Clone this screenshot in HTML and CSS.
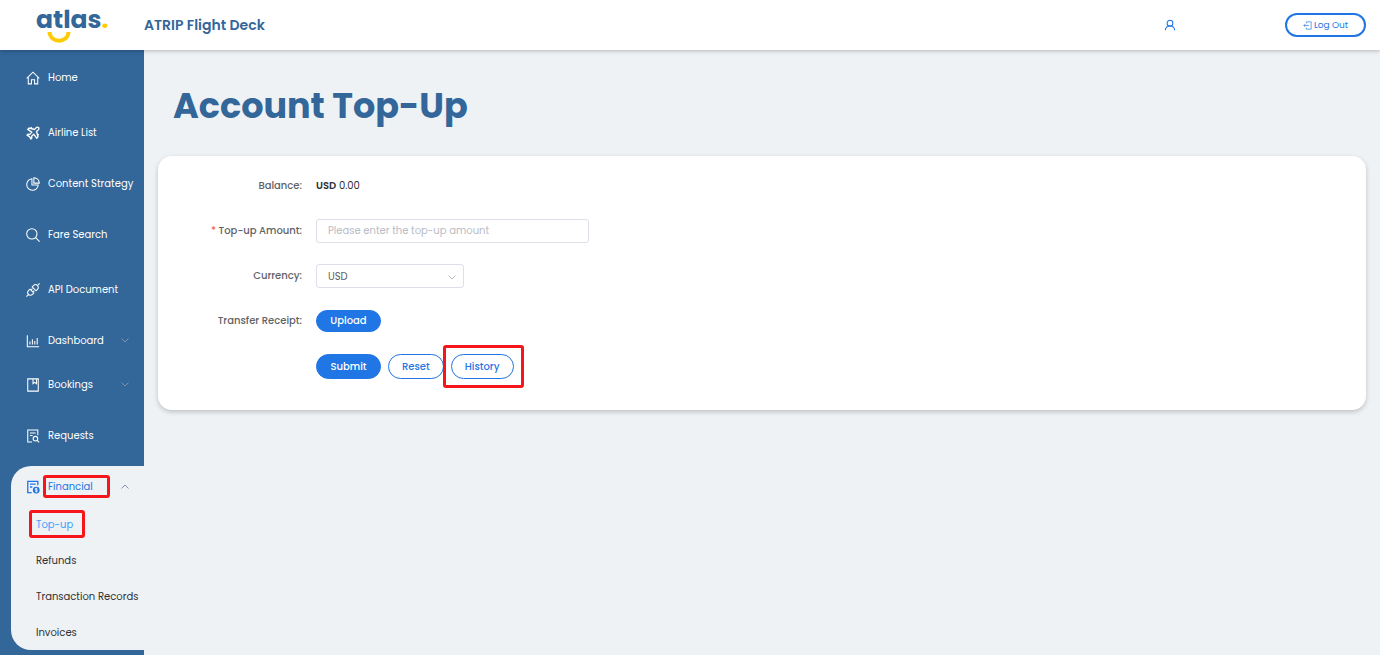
FILE: index.html
```
<!DOCTYPE html>
<html lang="en">
<head>
  <meta charset="UTF-8">
  <title>ATRIP Flight Deck</title>
  <link rel="stylesheet" href="styles.css">
</head>
<body>
  <header class="header">
    <a class="logo" href="#" aria-label="atlas">
      <span class="logo-text">atlas<span class="logo-dot">.</span></span>
      <svg class="logo-smile" viewBox="0 0 24 12"><path d="M2.500 0C3 11.500 21 11.500 21.500 0"/></svg>
    </a>
    <div class="app-name">ATRIP Flight Deck</div>
    <a class="user" href="#" aria-label="Profile">
      <svg class="icon" viewBox="0 0 16 16"><circle cx="8" cy="5.500" r="3.800"/><path d="M1.800 15c.2-3.600 2.700-5.700 6.200-5.700s6 2.100 6.200 5.700"/></svg>
    </a>
    <button class="logout" type="button">
      <svg class="icon" viewBox="0 0 16 16"><path d="M6 4V1.500h8.500v13H6V12M10.500 8H1.500M4.500 5l-3 3 3 3"/></svg>
      Log Out
    </button>
  </header>

  <div class="layout">
    <nav class="sidebar">
      <a class="nav-item" href="#">
        <svg class="icon" viewBox="0 0 16 16"><path d="M.8 8.500L8 1.300l7.200 7.200M2.600 7.500v7.200h3.600V10h3.600v4.700h3.600V7.500"/></svg>
        Home
      </a>
      <a class="nav-item wide" href="#">
        <svg class="icon bold" viewBox="0 0 16 16"><path d="M14.300 1.700c-.8-.7-2-.4-2.800.4L9.700 4 3.600 2.300 2 3.800l4.600 3.300-2.300 2.500-2-.3-1.100 1.100 2.700 1.700 1.700 2.700 1.100-1.100-.3-2 2.500-2.300 3.300 4.600 1.500-1.600L12 6.300l1.900-1.800c.8-.8 1.100-2 .4-2.800z"/><path d="M5.500 1.500l1.700 1.700M14.500 10.500l-1.700-1.700"/></svg>
        Airline List
      </a>
      <a class="nav-item" href="#">
        <svg class="icon" viewBox="0 0 16 16"><path d="M6.800 2A6.600 6.600 0 1 0 14 9.200H6.800z"/><path d="M9 .8V7h6.200C15 3.600 12.400 1 9 .8z"/></svg>
        Content Strategy
      </a>
      <a class="nav-item" href="#">
        <svg class="icon" viewBox="0 0 16 16"><circle cx="6.700" cy="6.700" r="5.900"/><path d="M11 11l4.500 4.500"/></svg>
        Fare Search
      </a>
      <a class="nav-item wide" href="#">
        <svg class="icon" viewBox="0 0 16 16"><path d="M7 4.500L11.500 9l1.600-1.600c1.300-1.300 1.300-3.200 0-4.500s-3.200-1.300-4.500 0zM4.500 7L9 11.500l-1.600 1.600c-1.300 1.300-3.200 1.300-4.500 0s-1.300-3.200 0-4.500zM13.100 2.900L15.500.500M2.900 13.100L.500 15.500M5.700 8.200l1.700-1.700M7.800 10.300l1.700-1.700"/></svg>
        API Document
      </a>
      <a class="nav-item" href="#">
        <svg class="icon" viewBox="0 0 16 16"><path d="M1.500 1.500v13H15M4.500 12V8.500M7.300 12V6M10 12V8M12.800 12V4.500"/></svg>
        Dashboard
        <svg class="arrow" viewBox="0 0 8 5"><path d="M.5.500L4 4 7.500.500"/></svg>
      </a>
      <a class="nav-item tight" href="#">
        <svg class="icon" viewBox="0 0 16 16"><path d="M2 1h12v14H2zM8 1v5.500l2-1.500 2 1.500V1"/></svg>
        Bookings
        <svg class="arrow" viewBox="0 0 8 5"><path d="M.5.500L4 4 7.500.500"/></svg>
      </a>
      <a class="nav-item" href="#">
        <svg class="icon" viewBox="0 0 16 16"><path d="M7 14.800H2V1.200h11.500v6M4.500 4.500H11M4.500 7.500h3"/><circle cx="10.800" cy="11" r="2.600"/><path d="M12.700 12.900l2.300 2.300"/></svg>
        Requests
      </a>

      <div class="nav-group">
        <a class="nav-item" href="#">
          <svg class="icon bold" viewBox="0 0 16 16"><path d="M6.500 14.500H2v-13h11.500V6M4.500 4.800H11M4.500 8h2.700"/><circle class="coin" cx="11.700" cy="11.500" r="3.900"/><path class="coin-mark" d="M13 10.200c-.6-.8-2.500-.7-2.500.4 0 1.200 2.600.7 2.600 1.900 0 1.100-2.100 1.200-2.700.3M11.700 9v5"/></svg>
          <span class="marked marked-parent">Financial</span>
          <svg class="arrow" viewBox="0 0 8 5"><path d="M.5 4.500L4 1l3.500 3.500"/></svg>
        </a>
        <a class="sub-item active" href="#"><span class="marked marked-child">Top-up</span></a>
        <a class="sub-item" href="#">Refunds</a>
        <a class="sub-item" href="#">Transaction Records</a>
        <a class="sub-item" href="#">Invoices</a>
      </div>
    </nav>

    <main class="content">
      <h1 class="page-title">Account Top-Up</h1>

      <form class="card">
        <div class="form-row">
          <span class="label">Balance:</span>
          <div class="balance"><strong>USD</strong> 0.00</div>
        </div>
        <div class="form-row">
          <label class="label" for="amount"><span class="required">*</span> Top-up Amount:</label>
          <input class="field amount" id="amount" type="text" placeholder="Please enter the top-up amount">
        </div>
        <div class="form-row">
          <label class="label" for="currency">Currency:</label>
          <div class="select-wrap">
            <select class="field" id="currency">
              <option>USD</option>
            </select>
            <svg class="select-arrow" viewBox="0 0 8 5"><path d="M.5.500L4 4 7.500.500"/></svg>
          </div>
        </div>
        <div class="form-row">
          <label class="label" for="upload">Transfer Receipt:</label>
          <button class="btn primary small" id="upload" type="button">Upload</button>
        </div>
        <div class="form-row">
          <span></span>
          <div class="actions">
            <button class="btn primary" type="button">Submit</button>
            <button class="btn" type="reset">Reset</button>
            <span class="marked marked-button"><button class="btn" type="button">History</button></span>
          </div>
        </div>
      </form>
    </main>
  </div>
</body>
</html>
```

FILE: styles.css
```
* {
  box-sizing: border-box;
}

body {
  margin: 0;
  min-height: 100vh;
  display: flex;
  flex-direction: column;
  font-family: Poppins, Inter, "Open Sans", sans-serif;
  font-size: 10px;
  color: #303133;
  background-color: #eef2f5;
}

a {
  color: inherit;
  text-decoration: none;
}

button, input, select {
  font-family: inherit;
  font-size: inherit;
}

svg {
  fill: none;
  stroke: currentColor;
  flex-shrink: 0;
}

.icon {
  width: 14px;
  height: 14px;
  stroke-width: 1.2;
}

.icon.bold {
  stroke-width: 1.5;
}

/* header */
.header {
  position: relative;
  z-index: 1;
  display: flex;
  align-items: center;
  height: 50px;
  padding-right: 14px;
  background-color: #fff;
  box-shadow: 0 1px 4px rgba(0, 0, 0, 0.25);
}

.logo {
  display: flex;
  flex-direction: column;
  width: 144px;
  padding: 2px 0 0 36px;
}

.logo-text {
  font-size: 25px;
  font-weight: 700;
  line-height: 24px;
  color: #336699;
}

.logo-dot {
  color: #ffcb05;
}

.logo-smile {
  width: 24px;
  height: 12px;
  margin-left: 11px;
  stroke: #ffcb05;
  stroke-width: 4;
}

.app-name {
  flex: 1;
  font-size: 14px;
  font-weight: 600;
  color: #336699;
}

.user {
  display: flex;
  margin-right: 109px;
  color: #1f76e4;
}

.user .icon {
  width: 12px;
  height: 14px;
  stroke-width: 1.4;
}

.logout {
  display: flex;
  align-items: center;
  justify-content: center;
  gap: 2px;
  width: 81px;
  height: 24px;
  padding: 0;
  font-size: 9px;
  color: #1f76e4;
  background-color: #fff;
  border: 2px solid #1f76e4;
  border-radius: 12px;
}

.logout .icon {
  width: 9px;
  height: 9px;
}

.layout {
  flex: 1;
  display: flex;
}

/* sidebar */
.sidebar {
  width: 144px;
  flex-shrink: 0;
  padding: 7px 0 5px;
  color: #fff;
  background-color: #336699;
}

.nav-item {
  display: flex;
  align-items: center;
  gap: 8px;
  height: 40px;
  margin-top: 11px;
  padding: 1px 15px 0 26px;
  white-space: nowrap;
}

.nav-item:first-child {
  margin-top: 0;
}

.nav-item.wide {
  margin-top: 15px;
}

.nav-item.tight {
  margin-top: 4px;
}

.arrow {
  width: 8px;
  height: 5px;
  margin-left: auto;
  stroke: #7f92a8;
}

.nav-group {
  margin: 11px 0 0 11px;
  color: #303133;
  background-color: #eef2f5;
  border-radius: 20px 0 0 20px;
}

.nav-group .nav-item {
  padding-left: 15px;
  color: #1f76e4;
}

.coin {
  fill: #1f76e4;
  stroke: none;
}

.coin-mark {
  stroke: #fff;
  stroke-width: 1;
}

.sub-item {
  display: flex;
  align-items: center;
  height: 36px;
  padding: 2px 0 0 25px;
  white-space: nowrap;
}

.sub-item.active {
  color: #409eff;
}

/* red frame around the steps to follow */
.marked {
  position: relative;
}

.marked::after {
  content: "";
  position: absolute;
  border: 3px solid #f5151b;
  border-radius: 3px;
  pointer-events: none;
}

.marked-parent::after {
  inset: -4px -17px -3px -5px;
}

.marked-child::after {
  inset: -7px -12px -5px -7px;
}

.marked-button::after {
  inset: -9px -10px -9px -8px;
}

/* page */
.content {
  flex: 1;
  padding: 32px 14px;
}

.page-title {
  margin: 0 0 26px;
  padding-left: 15px;
  font-size: 35px;
  font-weight: 700;
  line-height: 48px;
  color: #336699;
}

.card {
  display: flex;
  flex-direction: column;
  gap: 21px;
  padding: 18px 14px 31px;
  background-color: #fff;
  border-radius: 14px;
  box-shadow: 0 2px 5px rgba(0, 0, 0, 0.2);
}

.form-row {
  display: grid;
  grid-template-columns: 130px 1fr;
  column-gap: 14px;
  align-items: center;
  justify-items: start;
  min-height: 24px;
}

.label {
  justify-self: end;
  font-weight: 500;
  color: #606266;
}

.balance strong {
  font-weight: 600;
}

.required {
  color: #f56c6c;
}

.field {
  width: 100%;
  height: 24px;
  padding: 0 11px;
  color: #606266;
  background-color: #fff;
  border: 1px solid #dcdfe6;
  border-radius: 3px;
  appearance: none;
}

.field::placeholder {
  color: #b8bcc5;
}

.amount {
  max-width: 273px;
}

.select-wrap {
  position: relative;
  width: 148px;
}

.select-arrow {
  position: absolute;
  top: 11px;
  right: 8px;
  width: 8px;
  height: 5px;
  color: #b8bcc5;
  pointer-events: none;
}

.actions {
  display: flex;
  gap: 7px;
}

.btn {
  height: 25px;
  padding: 0 13px;
  font-weight: 500;
  color: #1f76e4;
  background-color: #fff;
  border: 1px solid #1f76e4;
  border-radius: 13px;
}

.btn.primary {
  min-width: 65px;
  color: #fff;
  background-color: #1f76e4;
}

.btn.small {
  height: 22px;
}
```
